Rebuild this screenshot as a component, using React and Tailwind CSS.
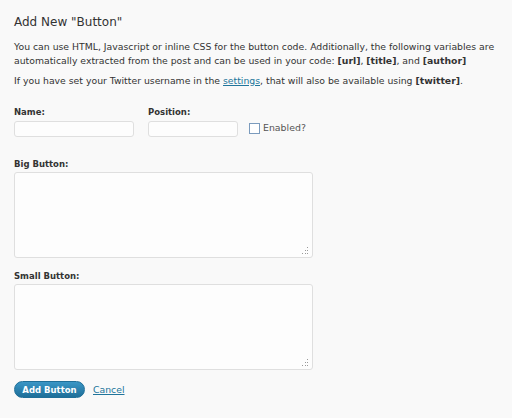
function Grip() {
  return (
    <svg className="pointer-events-none absolute bottom-[4px] right-[4px]" width="7" height="7" viewBox="0 0 7 7">
      <rect x="5" y="0" width="1" height="1" fill="#999" />
      <rect x="3" y="3" width="1" height="1" fill="#999" />
      <rect x="5" y="3" width="1" height="1" fill="#999" />
      <rect x="0" y="6" width="1" height="1" fill="#999" />
      <rect x="3" y="6" width="1" height="1" fill="#999" />
      <rect x="5" y="6" width="1" height="1" fill="#999" />
    </svg>
  );
}

function Area({ label, className }) {
  return (
    <div className={"flex flex-col " + className}>
      <label className="text-[8.5px] font-bold text-[#333]">{label}</label>
      <div className="relative mt-[1px] h-[86px] w-[299px]">
        <textarea className="h-full w-full resize-none rounded-[3px] border border-[#dfdfdf] bg-[#fdfdfd]" />
        <Grip />
      </div>
    </div>
  );
}

export default function App() {
  return (
    <div className="min-h-[418px] w-[512px] bg-[#f9f9f9] px-[14px] pt-[16px] font-['DejaVu_Sans',Verdana,sans-serif] text-[9.3px] leading-[14px] text-[#333]">
      <h2 className="text-[12px] leading-[12px] text-[#333]">Add New "Button"</h2>

      <p className="mt-[12px] whitespace-nowrap">
        You can use HTML, Javascript or inline CSS for the button code. Additionally, the following variables are
        <br />
        automatically extracted from the post and can be used in your code: <b>[url]</b>, <b>[title]</b>, and{" "}
        <b>[author]</b>
      </p>
      <p className="mt-[6px] whitespace-nowrap">
        If you have set your Twitter username in the{" "}
        <a href="#" className="text-[#21759b] underline">settings</a>, that will also be available using{" "}
        <b>[twitter]</b>.
      </p>

      <div className="mt-[17px] flex items-start">
        <div className="flex flex-col">
          <label className="text-[8.5px] font-bold">Name:</label>
          <input className="mt-[2px] h-[16px] w-[120px] rounded-[3px] border border-[#dfdfdf] bg-[#fdfdfd]" />
        </div>
        <div className="ml-[14px] flex flex-col">
          <label className="text-[8.5px] font-bold">Position:</label>
          <input className="mt-[2px] h-[16px] w-[90px] rounded-[3px] border border-[#dfdfdf] bg-[#fdfdfd]" />
        </div>
        <label className="ml-[11px] mt-[16px] flex items-center gap-[3px] text-[9.4px] text-[#555]">
          <span className="inline-block h-[11px] w-[11px] border border-[#7b9bbd] bg-white" />
          Enabled?
        </label>
      </div>

      <Area label="Big Button:" className="mt-[20px]" />
      <Area label="Small Button:" className="mt-[11px]" />

      <div className="mt-[11px] flex items-center gap-[8px]">
        <button className="h-[17px] w-[71px] rounded-[9px] border border-[#1f6f98] bg-gradient-to-b from-[#3a96c6] to-[#1e6f99] text-[8.5px] font-bold text-white">
          Add Button
        </button>
        <a href="#" className="text-[#21759b] underline">Cancel</a>
      </div>
    </div>
  );
}
